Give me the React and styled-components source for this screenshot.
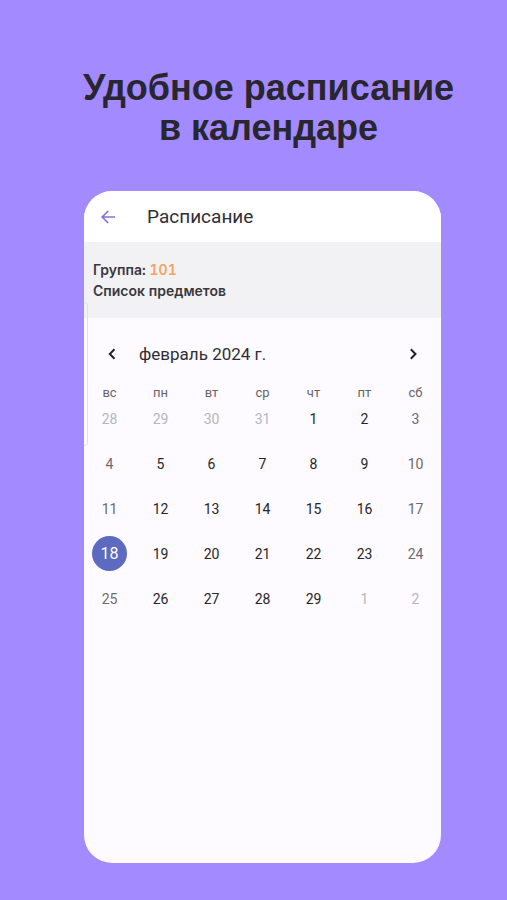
import React from 'react';
import styled, { createGlobalStyle } from 'styled-components';

const GlobalStyle = createGlobalStyle`
  * { box-sizing: border-box; }
  body { margin: 0; background: #a38bff; font-family: Roboto, sans-serif; color: #302e35; }
  button { border: 0; padding: 0; background: none; color: inherit; font: inherit; cursor: pointer; }
`;

const Page = styled.main`
  min-height: 100vh;
  display: flex;
  flex-direction: column;
  padding: 68px 66px 37px 84px;
`;

const Headline = styled.h1`
  margin: 0 -20px 43px -8px;
  font: bold 36px/40px "Liberation Sans", sans-serif;
  text-align: center;
  color: #28262e;
`;

const Phone = styled.section`
  position: relative;
  flex: 1;
  display: flex;
  flex-direction: column;
  overflow: hidden;
  border-radius: 28px;
  background: #fdfbff;
`;

const EdgeHandle = styled.span`
  position: absolute;
  left: 0;
  top: 111px;
  width: 4px;
  height: 144px;
  border: 1px solid #e2e0e7;
  border-left: 0;
  border-radius: 0 4px 4px 0;
`;

const AppBar = styled.header`
  display: flex;
  align-items: center;
  gap: 29px;
  height: 51px;
  padding: 0 14px;
  background: #fff;
`;

const IconButton = styled.button`
  display: grid;
  place-items: center;
  width: 20px;
  height: 20px;
  color: ${(p) => (p.$accent ? '#8474da' : '#222126')};
`;

const Title = styled.h2`
  margin: 0;
  font-size: 19px;
  font-weight: 400;
  line-height: 24px;
`;

const GroupInfo = styled.div`
  height: 76px;
  padding: 17px 9px;
  background: #f2f2f4;
  color: #3a383f;
  font: 600 14px/21px Inter, sans-serif;
  font-variant-numeric: tabular-nums;
`;

const GroupLine = styled.p`
  margin: 0;
`;

const GroupNumber = styled.span`
  color: #f7a160;
`;

const MonthBar = styled.div`
  display: flex;
  align-items: center;
  margin: 24px 18px 19px;
  line-height: 24px;
`;

const Month = styled.h3`
  flex: 1;
  margin: 0 0 0 17px;
  font-size: 17px;
  font-weight: 400;
`;

const Calendar = styled.table`
  width: 100%;
  table-layout: fixed;
  border-collapse: collapse;
  text-align: center;
`;

const Weekday = styled.th`
  height: 16px;
  padding: 0;
  font-size: 13px;
  font-weight: 400;
  line-height: 16px;
  vertical-align: top;
  color: #66646a;
`;

const DayCell = styled.td`
  height: 45px;
  padding: 0;
  vertical-align: top;
`;

const colors = { outside: '#b7b5bb', weekend: '#6c6a70', selected: '#fff', regular: '#27252b' };

const Day = styled.button`
  display: block;
  margin: 0 auto;
  width: 35px;
  height: 35px;
  border-radius: 50%;
  font-size: ${(p) => (p.$kind === 'selected' ? 16 : 14)}px;
  color: ${(p) => colors[p.$kind]};
  background: ${(p) => (p.$kind === 'selected' ? '#5c6bc0' : 'transparent')};
`;

const weekdays = ['вс', 'пн', 'вт', 'ср', 'чт', 'пт', 'сб'];
const days = Array.from({ length: 35 }, (_, i) => {
  const offset = i - 3;
  if (offset < 1) return { n: 31 + offset, kind: 'outside' };
  if (offset > 29) return { n: offset - 29, kind: 'outside' };
  if (offset === 18) return { n: offset, kind: 'selected' };
  return { n: offset, kind: i % 7 === 0 || i % 7 === 6 ? 'weekend' : 'regular' };
});
const weeks = [0, 1, 2, 3, 4].map((w) => days.slice(w * 7, w * 7 + 7));

function Stroke({ d, width }) {
  return (
    <svg width="16" height="16" viewBox="0 0 16 16" fill="none" stroke="currentColor" strokeWidth={width} aria-hidden="true">
      <path d={d} />
    </svg>
  );
}

export default function App() {
  return (
    <>
      <GlobalStyle />
      <Page>
        <Headline>Удобное расписание<br />в календаре</Headline>
        <Phone>
          <AppBar>
            <IconButton $accent aria-label="Назад"><Stroke d="M15 8H2M8.2 2L2.2 8L8.2 14" width={1.7} /></IconButton>
            <Title>Расписание</Title>
          </AppBar>
          <GroupInfo>
            <GroupLine>Группа: <GroupNumber>101</GroupNumber></GroupLine>
            <GroupLine>Список предметов</GroupLine>
          </GroupInfo>
          <MonthBar>
            <IconButton aria-label="Предыдущий месяц"><Stroke d="M10.5 3.3L5.8 8L10.5 12.7" width={2} /></IconButton>
            <Month>февраль 2024 г.</Month>
            <IconButton aria-label="Следующий месяц"><Stroke d="M5.8 3.3L10.5 8L5.8 12.7" width={2} /></IconButton>
          </MonthBar>
          <Calendar>
            <thead>
              <tr>{weekdays.map((d) => <Weekday key={d} scope="col">{d}</Weekday>)}</tr>
            </thead>
            <tbody>
              {weeks.map((week, w) => (
                <tr key={w}>
                  {week.map((d, i) => <DayCell key={i}><Day $kind={d.kind}>{d.n}</Day></DayCell>)}
                </tr>
              ))}
            </tbody>
          </Calendar>
          <EdgeHandle />
        </Phone>
      </Page>
    </>
  );
}
